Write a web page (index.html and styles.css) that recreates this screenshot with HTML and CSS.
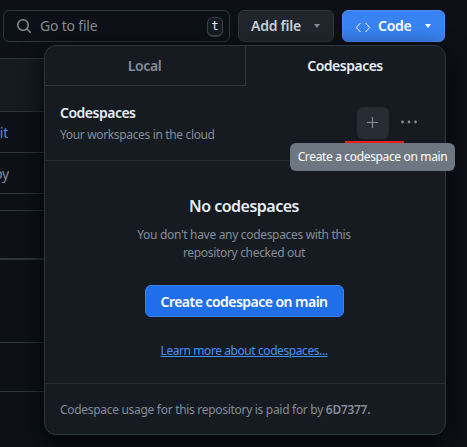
FILE: index.html
```
<!DOCTYPE html>
<html lang="en">
<head>
<meta charset="utf-8">
<title>Codespaces</title>
<link rel="stylesheet" href="styles.css">
</head>
<body>
<header class="toolbar">
  <div class="search">
    <svg class="search-icon" width="16" height="16" viewBox="0 0 16 16" fill="#848d97"><path d="M10.68 11.74a6 6 0 0 1-7.922-8.982 6 6 0 0 1 8.982 7.922l3.04 3.04a.749.749 0 1 1-1.06 1.06ZM11.5 7a4.499 4.499 0 1 0-8.997 0A4.499 4.499 0 0 0 11.5 7Z"/></svg>
    <span class="search-label">Go to file</span>
    <kbd class="key">t</kbd>
  </div>
  <button class="btn add-file"><span>Add file</span><i class="caret"></i></button>
  <button class="btn code">
    <svg width="16" height="16" viewBox="0 0 16 16" fill="none" stroke="#fff" stroke-width="1"><path d="M5.5 4 1.3 8.5l4.2 4.5M10.5 4l4.2 4.5-4.2 4.5"/></svg>
    <span>Code</span><i class="caret"></i>
  </button>
</header>

<main class="files">
  <div class="row commit"></div>
  <div class="row entry"><span class="cut">it</span></div>
  <div class="row entry"><span class="cut">by</span></div>
  <div class="row gap"></div>
  <div class="row bar"></div>
  <div class="row tall"></div>
  <div class="row short"></div>
</main>

<section class="popup">
  <nav class="tabs">
    <div class="tab">Local</div>
    <div class="tab active">Codespaces</div>
  </nav>
  <div class="head">
    <div class="head-text">
      <h2>Codespaces</h2>
      <p>Your workspaces in the cloud</p>
    </div>
    <div class="plus">
      <svg width="16" height="16" viewBox="0 0 16 16" stroke="#848d97" stroke-width="1.2"><path d="M2 7.5h11M7.5 2v11"/></svg>
      <span class="underline"></span>
      <span class="tooltip">Create a codespace on main</span>
    </div>
    <svg class="dots" width="18" height="16" viewBox="0 0 18 16" fill="#848d97"><circle cx="2.5" cy="8" r="1.4"/><circle cx="9" cy="8" r="1.4"/><circle cx="15.5" cy="8" r="1.4"/></svg>
  </div>
  <div class="empty">
    <h3>No codespaces</h3>
    <p>You don't have any codespaces with this<br>repository checked out</p>
    <button class="create">Create codespace on main</button>
    <a class="learn">Learn more about codespaces...</a>
  </div>
  <footer class="foot">Codespace usage for this repository is paid for by <b>6D7377.</b></footer>
</section>
</body>
</html>
```
FILE: styles.css
```
* { box-sizing: border-box; }
body {
  margin: 0;
  height: 447px;
  overflow: hidden;
  position: relative;
  background: #0d1117;
  color: #848d97;
  font: 12px/18px "Noto Sans", "Open Sans", sans-serif;
}
h2, h3, p { margin: 0; }
button { font-family: inherit; padding: 0; }

.toolbar { display: flex; height: 58px; padding: 10px 0 0 3px; }
.search {
  display: flex;
  align-items: center;
  width: 227px;
  height: 32px;
  padding: 0 6px 0 12px;
  border: 1px solid #30363d;
  border-radius: 6px;
}
.search-label { margin-left: 8px; font-size: 14px; letter-spacing: -.2px; flex: 1; }
.key {
  width: 16px;
  height: 20px;
  margin-top: 1px;
  border: 1px solid #3b4149;
  border-bottom-width: 2px;
  border-radius: 6px;
  background: #161b22;
  color: #e6edf3;
  font: 12px/17px "DejaVu Sans Mono", monospace;
  text-align: center;
}
.btn {
  display: flex;
  align-items: center;
  height: 32px;
  border: 1px solid #30363d;
  border-radius: 6px;
  font-size: 14px;
  font-weight: 600;
}
.btn span { margin-bottom: 2px; }
.add-file { width: 96px; margin-left: 8px; padding-left: 12px; background: #21262d; color: #c9d1d9; letter-spacing: -.25px; }
.code { width: 103px; margin-left: 8px; padding-left: 12px; background: #3883f3; border-color: #4b8ef4; color: #fff; letter-spacing: -.25px; }
.code svg { margin: 1px 7px 0 0; }
.caret { border: 3.5px solid transparent; border-top: 4px solid #848d97; border-bottom: 0; margin-left: 13px; }
.code .caret { border-top-color: #fff; }

.row { border-top: 1px solid #30363d; width: 60px; }
.commit { height: 53px; background: #161b22; }
.entry { height: 41px; display: flex; align-items: center; }
.cut { display: flex; justify-content: flex-end; width: 8px; overflow: hidden; color: #588bc9; font-size: 14px; line-height: 20px; margin-top: 2px; letter-spacing: -.2px; }
.entry + .entry .cut { color: #848d97; width: 9px; }
.gap { height: 17px; }
.bar { height: 48px; }
.tall { height: 84px; border-top-width: 2px; }
.short { height: 50px; border-bottom: 1px solid #30363d; }

.popup {
  position: absolute;
  left: 44px;
  top: 45px;
  width: 402px;
  height: 390px;
  display: flex;
  flex-direction: column;
  border: 1px solid #30363d;
  border-radius: 12px;
  background: #161b22;
  box-shadow: 0 8px 24px #010409;
}
.tabs { display: flex; height: 40px; }
.tab {
  width: 201px;
  padding-right: 1px;
  border: solid #30363d;
  border-width: 0 1px 1px 0;
  font-size: 14px;
  font-weight: 600;
  line-height: 39px;
  text-align: center;
  letter-spacing: -.4px;
}
.tab.active { width: 199px; border: 0; color: #e6edf3; letter-spacing: -.5px; }
.head { display: flex; height: 75px; padding-left: 15px; border-bottom: 1px solid #262c34; }
.head-text { width: 297px; padding-top: 16px; }
.head h2 { font-size: 14px; line-height: 21px; font-weight: 600; color: #e6edf3; letter-spacing: -.5px; }
.head p { margin-top: 3px; letter-spacing: -.35px; }
.plus {
  position: relative;
  display: flex;
  align-items: center;
  justify-content: center;
  width: 32px;
  height: 32px;
  margin-top: 21px;
  border-radius: 6px;
  background: #272d35;
}
.underline { position: absolute; left: -12px; top: 34px; width: 59px; height: 3px; background: #e91e1e; }
.tooltip {
  position: absolute;
  left: -67px;
  top: 36px;
  width: 165px;
  height: 28px;
  border-radius: 6px;
  background: #6e7681;
  color: #fff;
  line-height: 28px;
  text-align: center;
  white-space: nowrap;
  letter-spacing: -.35px;
}
.dots { margin: 28px 0 0 11px; }
.empty { display: flex; flex-direction: column; align-items: center; height: 222px; padding: 33px 2px 0 0; }
.empty h3 { font-size: 16px; line-height: 24px; font-weight: 600; color: #e6edf3; letter-spacing: -.5px; }
.empty p { margin-top: 8px; text-align: center; letter-spacing: -.32px; }
.create {
  width: 199px;
  height: 32px;
  margin-top: 23px;
  border: 1px solid #3a80ee;
  border-radius: 6px;
  background: #1f6feb;
  color: #fff;
  font-size: 14px;
  font-weight: 600;
  letter-spacing: -.53px;
}
.learn { margin-top: 25px; color: #4493f8; text-decoration: underline; letter-spacing: -.42px; }
.foot { flex: 1; padding: 17px 0 0 15px; border-top: 1px solid #262c34; letter-spacing: -.3px; }
.foot b { font-weight: 600; }
```
